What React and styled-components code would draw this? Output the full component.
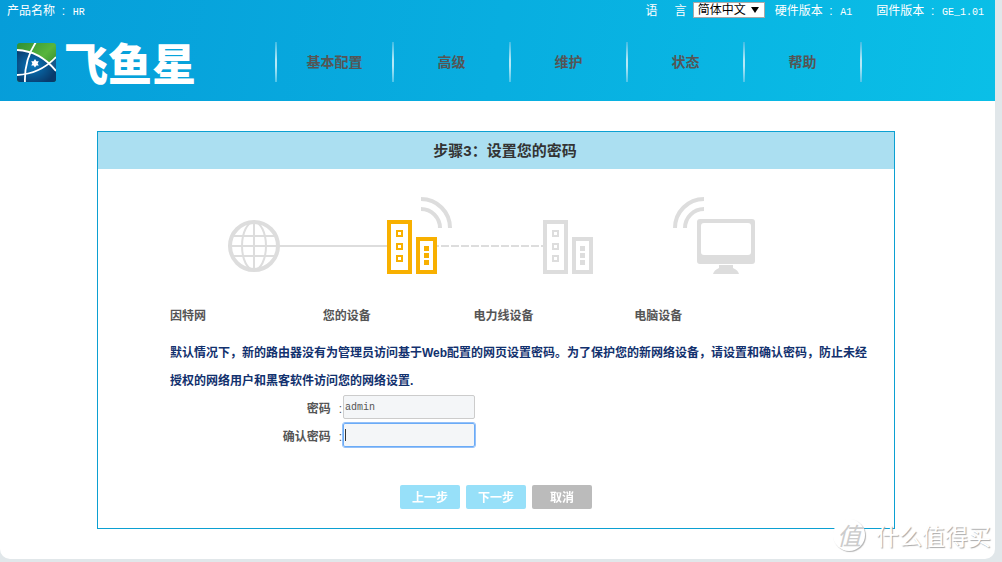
import React from 'react';
import styled, { createGlobalStyle } from 'styled-components';

const GlobalStyle = createGlobalStyle`
  * {
    box-sizing: border-box;
  }
  body {
    margin: 0;
    background-color: #e1e7ea;
    color: #555555;
    font-family: "Liberation Sans", "Noto Sans CJK SC", sans-serif;
    font-size: 12px;
  }
`

const StyledPage = styled.div`
  position: relative;
  margin-right: 7px;
  padding-bottom: 30px;
  background-color: white;
  border-radius: 0 0 10px 10px;
`
const StyledHeader = styled.header`
  height: 101px;
  background: linear-gradient(100deg, #069dd9, #0abfe7);
`
const StyledTopBar = styled.div`
  display: flex;
  align-items: center;
  height: 19px;
  padding: 0 11px 0 7px;
  color: white;
  white-space: pre;
`
const StyledMono = styled.span`
  margin-left: 1px;
  font-family: "Liberation Mono", monospace;
  font-size: 10px;
`
const StyledInfo = styled.span`
  margin-left: ${props => props.$gap || 0}px;
`
const StyledLanguage = styled.label`
  display: flex;
  align-items: center;
  gap: 17px;
  margin-left: auto;
`
const StyledSelectBox = styled.span`
  position: relative;
  display: flex;
  margin-left: 6px;

  &::after {
    content: '';
    position: absolute;
    top: 5px;
    right: 6px;
    border: 4px solid transparent;
    border-top: 6px solid black;
    border-bottom: 0;
    pointer-events: none;
  }
`
const StyledSelect = styled.select`
  appearance: none;
  width: 72px;
  height: 16px;
  padding: 0 0 0 4px;
  border: 1px solid #a9a9a9;
  border-radius: 0;
  background-color: white;
  color: black;
  font: 12px/14px "Liberation Sans", "Noto Sans CJK SC", sans-serif;
`
const StyledBrandBar = styled.div`
  display: flex;
  align-items: center;
  height: 86px;
  padding: 0 0 0 17px;
`
const StyledBrand = styled.a`
  display: flex;
  align-items: center;
  gap: 8px;
  width: 258px;
  height: 40px;
  color: white;
  font: 900 44px/40px "Noto Sans CJK SC", sans-serif;
  text-decoration: none;
`
const StyledNav = styled.nav`
  display: flex;
  height: 40px;
`
const StyledDivider = styled.span`
  width: 2px;
  background: linear-gradient(#3fbbe3, #b5e8f6 45%, #b5e8f6 60%, #4fc4e8);
`
const StyledNavLink = styled.a`
  width: 115px;
  color: #555555;
  font-size: 14px;
  font-weight: bold;
  line-height: 40px;
  text-align: center;
  text-decoration: none;
`
const StyledPanel = styled.main`
  margin: 30px 100px 0 97px;
  border: 1px solid #0ba0d2;
`
const StyledPanelTitle = styled.h1`
  margin: 0;
  padding-left: 18px;
  background-color: #abdff1;
  color: #333333;
  font-size: 15px;
  line-height: 37px;
  text-align: center;
`
const StyledPanelBody = styled.div`
  padding: 26px 20px 19px 72px;
`
const StyledDiagram = styled.svg`
  display: block;
  margin-left: 57px;
`
const StyledDevices = styled.ul`
  display: grid;
  grid-template-columns: 153fr 151fr 161fr 240fr;
  margin: 26px 0 8px;
  padding: 0;
  font-weight: bold;
  line-height: 30px;
  list-style-type: none;
`
const StyledHint = styled.p`
  margin: 0;
  color: #12316e;
  font-weight: bold;
  line-height: 28px;
`
const StyledField = styled.div`
  display: flex;
  height: 28px;
`
const StyledLabel = styled.label`
  display: flex;
  justify-content: flex-end;
  gap: 8px;
  width: 173px;
  padding-right: 1px;
  font-weight: bold;
  line-height: 28px;
`
const StyledColon = styled.span`
  font-weight: normal;
`
const StyledInput = styled.input`
  width: 132px;
  height: 24px;
  padding: 0 1px;
  border: 1px solid #cccccc;
  border-radius: 2px;
  background-color: #f4f6f8;
  color: #555555;
  font: 10px "Liberation Mono", monospace;

  &:focus {
    border-color: #6aabf7;
    outline: 1px solid #94c0f8;
  }
  &:focus:placeholder-shown {
    background-image: linear-gradient(#333333, #333333);
    background-position: 1px center;
    background-repeat: no-repeat;
    background-size: 1px 12px;
    caret-color: transparent;
  }
`
const StyledActions = styled.div`
  display: flex;
  justify-content: center;
  gap: 6px;
  margin: 34px 52px 0 0;
`
const StyledButton = styled.button`
  width: 60px;
  height: 24px;
  padding: 0;
  border: 0;
  border-radius: 2px;
  background-color: ${props => props.$muted ? '#bbbbbb' : '#97e0f9'};
  color: white;
  font: bold 12px/24px "Noto Sans CJK SC", sans-serif;
`
const StyledWatermark = styled.div`
  position: absolute;
  right: 4px;
  bottom: 7px;
  display: flex;
  align-items: center;
  gap: 11px;
  color: white;
  font: 23px/34px "Noto Sans CJK SC", sans-serif;
  text-shadow: 1px 1px 1px #a8a8a8;
`
const StyledWatermarkBadge = styled.span`
  width: 32px;
  height: 32px;
  border-radius: 50%;
  background-color: white;
  box-shadow: 1px 1px 1px #b5b5b5;
  color: #cccccc;
  font-size: 24px;
  font-style: italic;
  line-height: 32px;
  text-align: center;
  text-shadow: none;
`

const NAV_ITEMS = ['基本配置', '高级', '维护', '状态', '帮助'];
const DEVICES = ['因特网', '您的设备', '电力线设备', '电脑设备'];

const LogoMark = () => (
  <svg width="39" height="39" viewBox="0 0 39 39" aria-hidden="true">
    <defs>
      <linearGradient id="green" x1="0" y1="0" x2="1" y2="1">
        <stop offset="0" stopColor="#2f8f35" />
        <stop offset="0.5" stopColor="#58b53c" />
        <stop offset="1" stopColor="#1c6b2b" />
      </linearGradient>
      <radialGradient id="blue" cx="0.4" cy="0.5" r="0.6">
        <stop offset="0" stopColor="#0879bd" />
        <stop offset="1" stopColor="#083a6c" />
      </radialGradient>
      <clipPath id="tile"><rect width="39" height="39" rx="3" /></clipPath>
    </defs>
    <g clipPath="url(#tile)">
      <rect width="39" height="39" fill="url(#green)" />
      <path d="M0 7Q23 8 39 28V39H0Z" fill="url(#blue)" />
      <path d="M39 15Q35 19 31 22L39 29Z" fill="#17598a" />
      <g fill="none" stroke="white" strokeWidth="1.8">
        <path d="M0 7Q23 8 39 28" />
        <path d="M19 -1Q7 17 8 40" />
        <path d="M0 32Q23 31 39 14" />
      </g>
      <path d="M18 16l1.400 2.200h2.400l-1.200 2.200 1.200 2.200h-2.400L18 24.600l-1.400-2h-2.400l1.200-2.200-1.200-2.200h2.400z" fill="white" />
    </g>
  </svg>
);

const Adapter = ({ x, color }) => (
  <g transform={`translate(${x} 24)`} fill="none" stroke={color}>
    <rect x="2" y="2" width="21" height="50" strokeWidth="4" />
    <rect x="31" y="19" width="17" height="33" strokeWidth="4" />
    <g strokeWidth="2">
      <rect x="10" y="11" width="5" height="5" />
      <rect x="10" y="24" width="5" height="5" />
      <rect x="10" y="36" width="5" height="5" />
    </g>
    <path d="M37 28.500h5M37 35.500h5M37 42.500h5" strokeWidth="5" />
  </g>
);

// internet -> this device -> powerline device -> computer
const Diagram = () => (
  <StyledDiagram width="530" height="80" viewBox="0 0 530 80" role="img" aria-label="网络连接">
    <g transform="translate(1 1)">
      <g fill="none" stroke="#dddddd">
        <circle cx="26" cy="50" r="24" strokeWidth="4" />
        <ellipse cx="26" cy="50" rx="12" ry="24" strokeWidth="2" />
        <path d="M26 26V74M2 50H159M5 40H47M5 60H47" strokeWidth="2" />
        <path d="M209 50H316" strokeWidth="2" strokeDasharray="8 2" strokeDashoffset="6" />
        <path d="M193 3A29 29 0 0 1 222 32M193 13A19 19 0 0 1 212 32" strokeWidth="4" />
        <path d="M476 3A29 29 0 0 0 447 32M476 13A19 19 0 0 0 457 32" strokeWidth="4" />
      </g>
      <Adapter x={159} color="#f8b000" />
      <Adapter x={315} color="#dddddd" />
      <g fill="#dddddd">
        <path fillRule="evenodd" d="M472 23H524Q527 23 527 26V65Q527 68 524 68H472Q469 68 469 65V26Q469 23 472 23ZM476 27Q473 27 473 30V56Q473 59 476 59H520Q523 59 523 56V30Q523 27 520 27Z" />
        <path d="M491 69H505V72Q510 74 511 78H485Q486 74 491 72Z" />
      </g>
    </g>
  </StyledDiagram>
);

export default class App extends React.Component {
  render() {
    return (
      <StyledPage>
        <GlobalStyle />
        <StyledHeader>
          <StyledTopBar>
            <span>产品名称  :  <StyledMono>HR</StyledMono></span>
            <StyledLanguage htmlFor="language">
              <span>语</span>
              <span>言</span>
            </StyledLanguage>
            <StyledSelectBox>
              <StyledSelect id="language" defaultValue="zh">
                <option value="zh">简体中文</option>
                <option value="en">English</option>
              </StyledSelect>
            </StyledSelectBox>
            <StyledInfo $gap={10}>硬件版本  :  <StyledMono>A1</StyledMono></StyledInfo>
            <StyledInfo $gap={24}>固件版本  :  <StyledMono>GE_1.01</StyledMono></StyledInfo>
          </StyledTopBar>
          <StyledBrandBar>
            <StyledBrand href="#">
              <LogoMark />
              <span>飞鱼星</span>
            </StyledBrand>
            <StyledNav>
              <StyledDivider />
              {NAV_ITEMS.map(item => (
                <React.Fragment key={item}>
                  <StyledNavLink href="#">{item}</StyledNavLink>
                  <StyledDivider />
                </React.Fragment>
              ))}
            </StyledNav>
          </StyledBrandBar>
        </StyledHeader>

        <StyledPanel>
          <StyledPanelTitle>步骤3：设置您的密码</StyledPanelTitle>
          <StyledPanelBody>
            <Diagram />
            <StyledDevices>
              {DEVICES.map(device => <li key={device}>{device}</li>)}
            </StyledDevices>
            <StyledHint>
              默认情况下，新的路由器没有为管理员访问基于Web配置的网页设置密码。为了保护您的新网络设备，请设置和确认密码，防止未经授权的网络用户和黑客软件访问您的网络设置.
            </StyledHint>
            <StyledField>
              <StyledLabel htmlFor="password">密码<StyledColon>:</StyledColon></StyledLabel>
              <StyledInput id="password" type="text" defaultValue="admin" />
            </StyledField>
            <StyledField>
              <StyledLabel htmlFor="confirm">确认密码<StyledColon>:</StyledColon></StyledLabel>
              <StyledInput id="confirm" type="text" placeholder=" " autoFocus />
            </StyledField>
            <StyledActions>
              <StyledButton type="button">上一步</StyledButton>
              <StyledButton type="button">下一步</StyledButton>
              <StyledButton type="button" $muted>取消</StyledButton>
            </StyledActions>
          </StyledPanelBody>
        </StyledPanel>

        <StyledWatermark>
          <StyledWatermarkBadge>值</StyledWatermarkBadge>
          <span>什么值得买</span>
        </StyledWatermark>
      </StyledPage>
    );
  }
}
